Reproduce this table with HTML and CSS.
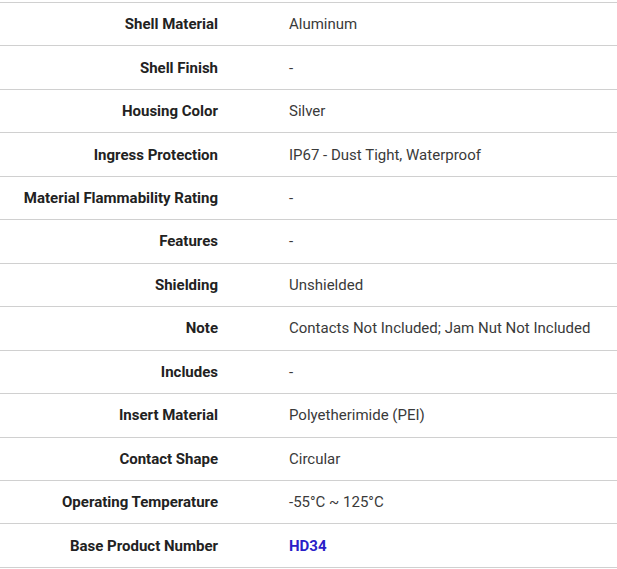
FILE: index.html
```html
<!DOCTYPE html>
<html>
<head>
<meta charset="utf-8">
<link rel="stylesheet" href="styles.css">
</head>
<body>
<table class="specs">
<tbody>
<tr><th>Shell Material</th><td>Aluminum</td></tr>
<tr><th>Shell Finish</th><td>-</td></tr>
<tr><th>Housing Color</th><td>Silver</td></tr>
<tr><th>Ingress Protection</th><td>IP67 - Dust Tight, Waterproof</td></tr>
<tr><th>Material Flammability Rating</th><td>-</td></tr>
<tr><th>Features</th><td>-</td></tr>
<tr><th>Shielding</th><td>Unshielded</td></tr>
<tr><th>Note</th><td>Contacts Not Included; Jam Nut Not Included</td></tr>
<tr><th>Includes</th><td>-</td></tr>
<tr><th>Insert Material</th><td>Polyetherimide (PEI)</td></tr>
<tr><th>Contact Shape</th><td>Circular</td></tr>
<tr><th>Operating Temperature</th><td>-55°C ~ 125°C</td></tr>
<tr><th>Base Product Number</th><td><a class="link" href="#">HD34</a></td></tr>
</tbody>
</table>
</body>
</html>
```
FILE: styles.css
```css
html, body {
  margin: 0;
  padding: 0;
  background: #fff;
}
body {
  padding-top: 2px;
  font-family: Roboto, "Liberation Sans", sans-serif;
  font-size: 15px;
}
.specs {
  width: 617px;
  border-collapse: collapse;
  table-layout: fixed;
}
.specs tr {
  height: 43.46px;
  border-top: 1px solid #d0d0d0;
  border-bottom: 1px solid #d0d0d0;
}
.specs th {
  width: 218px;
  padding: 0 35px 0 0;
  text-align: right;
  font-weight: 700;
  color: #222;
  vertical-align: middle;
}
.specs td {
  padding: 0 0 0 36px;
  text-align: left;
  color: #3a3a3a;
  vertical-align: middle;
}
.link {
  color: #2a1ec8;
  font-weight: 700;
  text-decoration: none;
}
```
